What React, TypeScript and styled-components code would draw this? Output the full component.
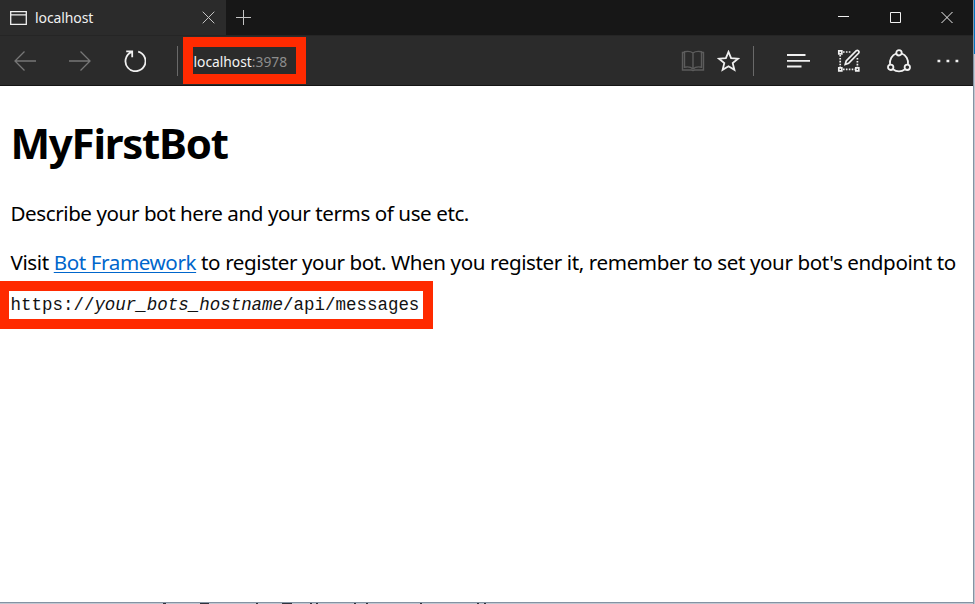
import React from 'react';
import styled, { createGlobalStyle } from 'styled-components';

const Global = createGlobalStyle`
  *, *::before, *::after { box-sizing: border-box; }
  body { margin: 0; background: #fff; overflow: hidden; }
`;

const Desktop = styled.div`
  width: 975px;
  height: 604px;
  display: grid;
  grid-template-columns: 973px 1px 1px;
  overflow: hidden;
  font-family: 'Noto Sans', 'Open Sans', sans-serif;
`;

const Window = styled.div`
  height: 604px;
  display: flex;
  flex-direction: column;
  background: #fff;
`;

const Edge = styled.div<{ $top: string; $rest: string }>`
  background: linear-gradient(${p => p.$top} 54px, ${p => p.$rest} 54px);
`;

const TitleBar = styled.header`
  height: 35px;
  flex: none;
  display: flex;
  background: #171717;
`;

const Tab = styled.div`
  width: 226px;
  height: 35px;
  display: flex;
  align-items: center;
  padding: 0 11px 0 10px;
  background: #2b2b2b;
  color: #f0f0f0;
`;

const TabTitle = styled.span`
  flex: 1;
  margin-left: 8px;
  font-size: 14px;
  line-height: 20px;
  letter-spacing: -0.1px;
`;

const Glyph = styled.svg<{ $gap?: number; $tone?: string }>`
  display: block;
  flex: none;
  fill: none;
  stroke: ${p => p.$tone ?? '#f0f0f0'};
  margin-left: ${p => p.$gap ?? 0}px;
`;

const Spacer = styled.div`
  flex: 1;
`;

const WindowControls = styled.div`
  display: flex;
  align-items: center;
  gap: 40px;
  padding-right: 20px;
`;

const NewTab = styled.div`
  display: flex;
  align-items: center;
  padding-left: 10px;
`;

const Toolbar = styled.nav`
  height: 51px;
  flex: none;
  display: flex;
  align-items: center;
  padding-right: 14px;
  background: #2b2b2b;
  border-bottom: 1px solid #151515;
  border-top: 1px solid #252525;
`;

const Divider = styled.div<{ $gap: number }>`
  width: 1px;
  height: 30px;
  background: #696969;
  margin-left: ${p => p.$gap}px;
`;

const Address = styled.div`
  width: 123px;
  height: 47px;
  margin-left: 5px;
  border: 10px solid #ff2a00;
  background: #2b2b2b;
  color: #f4f4f4;
  font-size: 13.8px;
  line-height: 30px;
  padding-left: 0.5px;
  white-space: nowrap;
`;

const Port = styled.span`
  color: #8d8d8d;
`;

const Page = styled.main`
  flex: 1;
  padding-left: 10.5px;
  color: #000;
  white-space: nowrap;
`;

const Heading = styled.h1`
  margin: 28px 0 0;
  font-size: 42px;
  line-height: 58px;
  letter-spacing: -1.25px;
  font-weight: 700;
`;

const Paragraph = styled.p<{ $top: number; $tracking: number }>`
  margin: ${p => p.$top}px 0 0;
  font-size: 20.6px;
  line-height: 28px;
  letter-spacing: ${p => p.$tracking}px;
`;

const Link = styled.a`
  color: #0066cc;
  text-decoration: underline;
  text-decoration-thickness: 1px;
  text-underline-offset: 2px;
`;

const Endpoint = styled.div`
  width: 434px;
  height: 48px;
  margin: 5px 0 0 -11.5px;
  border: 10px solid #ff2a00;
  padding-left: 1.5px;
  font-family: 'Liberation Mono', monospace;
  font-size: 17.48px;
  line-height: 29px;
  color: #111;
`;

const WindowBottom = styled.footer`
  height: 2px;
  flex: none;
  display: flex;
  background: linear-gradient(#8493a3 50%, #c1c6d0 50%);
  padding: 1px 0 0 163px;
`;

const Fragment = styled.span<{ $gap: number; $size: number }>`
  width: ${p => p.$size}px;
  height: 1px;
  margin-left: ${p => p.$gap}px;
  background: #30333b;
`;

// Slivers of the window behind: [gap before, width]
const behind = [[0, 3], [34, 9], [47, 2], [24, 10], [18, 2], [4, 2], [36, 2], [10, 2], [52, 2], [55, 2], [5, 2]];

export default function App() {
  return (
    <>
      <Global />
      <Desktop>
        <Window>
          <TitleBar>
            <Tab>
              <Glyph width="17" height="14" viewBox="0 0 17 14" strokeWidth="1.3">
                <path d="M.7.7h15.6v12.6H.7zM.7 3.9h15.6" />
              </Glyph>
              <TabTitle>localhost</TabTitle>
              <Glyph width="13" height="13" viewBox="0 0 13 13" $tone="#c4c4c4">
                <path d="M.7.7l11.6 11.6M12.3.7L.7 12.3" />
              </Glyph>
            </Tab>
            <NewTab>
              <Glyph width="15" height="15" viewBox="0 0 15 15" $tone="#c4c4c4">
                <path d="M7.5 0v15M0 7.5h15" />
              </Glyph>
            </NewTab>
            <Spacer />
            <WindowControls>
              <Glyph width="12" height="12" viewBox="0 0 12 12"><path d="M1 4.5h11.5" /></Glyph>
              <Glyph width="12" height="12" viewBox="0 0 12 12"><path d="M1.5.5h10v10h-10z" /></Glyph>
              <Glyph width="12" height="12" viewBox="0 0 12 12"><path d="M.5 0l11 11M11.5 0l-11 11" /></Glyph>
            </WindowControls>
          </TitleBar>
          <Toolbar>
            <Glyph width="22" height="20" viewBox="0 0 22 20" $gap={14} $tone="#777" strokeWidth="1.3">
              <path d="M22 10H1M10.5.5L1 10l9.5 9.5" />
            </Glyph>
            <Glyph width="22" height="20" viewBox="0 0 22 20" $gap={33} $tone="#777" strokeWidth="1.3">
              <path d="M0 10h21M11.5.5L21 10l-9.5 9.5" />
            </Glyph>
            <Glyph width="22" height="22" viewBox="0 0 22 22" $gap={32.5} strokeWidth="1.8">
              <path d="M14.2 1.6A10 10 0 1 1 7.4 2.1M2.2 1.3h6v5.9" />
            </Glyph>
            <Divider $gap={31.5} />
            <Address>localhost<Port>:3978</Port></Address>
            <Spacer />
            <Glyph width="24" height="22" viewBox="0 0 24 22" $tone="#5c5c5c" strokeWidth="1.4">
              <path d="M12 3v16M12 3C10 1.3 6 1.3 3.5 1.7v15.5C6 16.7 10 17 12 19c2-2 6-2.3 8.5-1.8V1.7C18 1.3 14 1.3 12 3M3.5 2.5H1.500v17.500h9c.5.8 2.500.8 3 0h9V2.500h-2" />
            </Glyph>
            <Glyph width="23" height="22" viewBox="0 0 23 22" $gap={12} strokeWidth="1.8">
              <path d="M11.5 1.9l2.6 6.3 6.9.5-5.300 4.400 1.700 6.700-5.900-3.600-5.900 3.600 1.700-6.700L2 8.700l6.900-.5z" />
            </Glyph>
            <Divider $gap={13} />
            <Glyph width="23" height="16" viewBox="0 0 23 16" $gap={33} strokeWidth="1.8">
              <path d="M0 2h18.5M0 7.8h23M0 13.5h14.5" />
            </Glyph>
            <Glyph width="24" height="24" viewBox="0 0 24 24" $gap={26.5} strokeWidth="1.7">
              <path d="M1.8 1.8h3v3h-3zM1.8 18.8h3v3h-3zM18.8 18.8h3v3h-3z" />
              <path strokeDasharray="1.6 1.3" d="M6 3h8M3.2 6v12M6 20.4h12M20.4 9v9" />
              <path d="M8.2 15.5l1-3.6L19.3 1.7c1.5-.9 3.4.6 2.4 2.3L11.6 14.3z" />
            </Glyph>
            <Glyph width="24" height="24" viewBox="0 0 24 24" $gap={26} strokeWidth="1.8">
              <circle cx="12" cy="3.8" r="2.7" />
              <circle cx="3.7" cy="18.3" r="2.7" />
              <circle cx="20.3" cy="18.3" r="2.7" />
              <path d="M9.3 4.5C5 6 2.3 10.5 3 15.6M14.7 4.5C19 6 21.7 10.5 21 15.6M6 20.3c3.5 2.7 8.5 2.7 12 0" />
            </Glyph>
            <Glyph width="22" height="4" viewBox="0 0 22 4" $gap={26.5} strokeWidth="2.6">
              <path d="M.5 2h2.8M9.5 2h2.8M18.5 2h2.8" />
            </Glyph>
          </Toolbar>
          <Page>
            <Heading>MyFirstBot</Heading>
            <Paragraph $top={27} $tracking={-0.43}>Describe your bot here and your terms of use etc.</Paragraph>
            <Paragraph $top={21} $tracking={-0.4}>
              Visit <Link>Bot Framework</Link> to register your bot. When you register it, remember to set your bot's endpoint to
            </Paragraph>
            <Endpoint>https://<em>your_bots_hostname</em>/api/messages</Endpoint>
          </Page>
          <WindowBottom>
            {behind.map(([gap, size], i) => <Fragment key={i} $gap={gap} $size={size} />)}
          </WindowBottom>
        </Window>
        <Edge $top="#8396aa" $rest="#8493a3" />
        <Edge $top="#0072bd" $rest="#c1c6d0" />
      </Desktop>
    </>
  );
}
